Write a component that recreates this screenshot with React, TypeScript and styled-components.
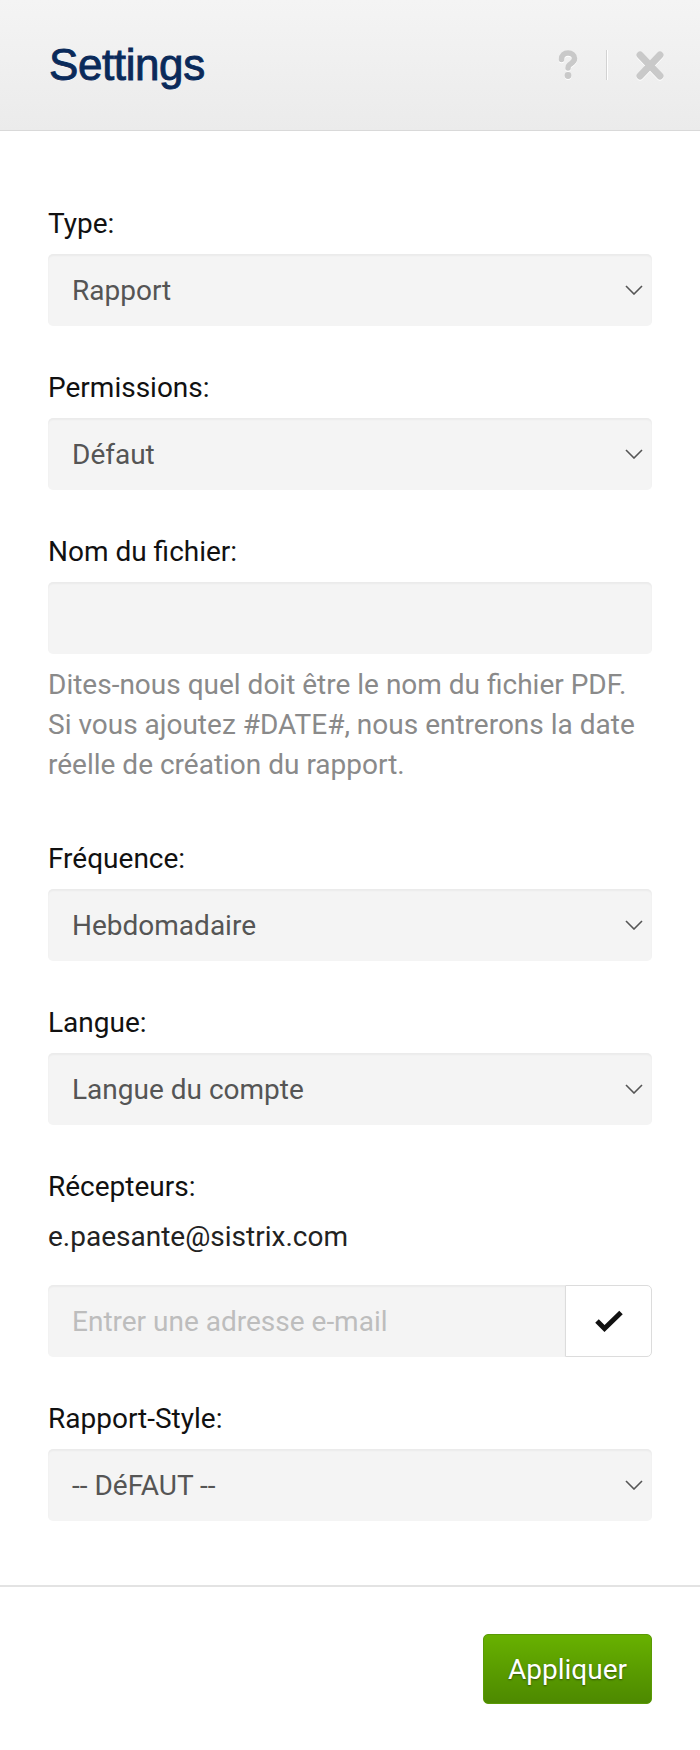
import { FC } from 'react'
import styled, { createGlobalStyle } from 'styled-components'

const GlobalStyle = createGlobalStyle`
  html, body {
    margin: 0;
    padding: 0;
    background: #fff;
  }
  body {
    font-family: Roboto, "Liberation Sans", Arial, sans-serif;
    -webkit-font-smoothing: antialiased;
  }
  * { box-sizing: border-box; }
`

// 下拉框的选项
const selects = [
  { label: 'Type:', value: 'Rapport' },
  { label: 'Permissions:', value: 'Défaut' },
]

const selectsAfter = [
  { label: 'Fréquence:', value: 'Hebdomadaire' },
  { label: 'Langue:', value: 'Langue du compte' },
]

const Chevron: FC = () => (
  <svg width="18" height="10" viewBox="0 0 18 10" fill="none">
    <path d="M1 1l8 8 8-8" stroke="#555" strokeWidth="1.6" strokeLinejoin="miter" />
  </svg>
)

interface SelectFieldProps {
  label: string;
  value: string;
}

const SelectField: FC<SelectFieldProps> = ({ label, value }) => (
  <Field>
    <Label>{label}</Label>
    <SelectBox>
      <span>{value}</span>
      <Chevron />
    </SelectBox>
  </Field>
)

const App: FC = () => {
  return (
    <Modal>
      <GlobalStyle />
      <Header>
        <Title>Settings</Title>
        <HeaderTools>
          <ToolIcon aria-label="help">
            <svg width="20" height="30" viewBox="0 0 20 30" fill="none">
              <path
                d="M3.5 9.5C3.5 5.2 6.5 3 10 3c3.8 0 6.5 2.2 6.5 5.6 0 3.6-3.2 4.6-5 6.2-1 .9-1.5 1.6-1.5 3.2"
                stroke="#c9c9c9"
                strokeWidth="5.5"
                strokeLinecap="round"
              />
              <circle cx="10" cy="25.5" r="3.4" fill="#c9c9c9" />
            </svg>
          </ToolIcon>
          <ToolDivider />
          <ToolIcon aria-label="close">
            <svg width="30" height="31" viewBox="0 0 30 31" fill="none">
              <path d="M5 5l20 21M25 5L5 26" stroke="#c9c9c9" strokeWidth="7" strokeLinecap="round" />
            </svg>
          </ToolIcon>
        </HeaderTools>
      </Header>

      <Body>
        {selects.map(s => (
          <SelectField key={s.label} label={s.label} value={s.value} />
        ))}

        <Field $wide>
          <Label>Nom du fichier:</Label>
          <TextInput type="text" />
          <Help>
            Dites-nous quel doit être le nom du fichier PDF.<br />
            Si vous ajoutez #DATE#, nous entrerons la date<br />
            réelle de création du rapport.
          </Help>
        </Field>

        {selectsAfter.map(s => (
          <SelectField key={s.label} label={s.label} value={s.value} />
        ))}

        <Field>
          <Label>Récepteurs:</Label>
          <Recipient>e.paesante@sistrix.com</Recipient>
          <InputGroup>
            <GroupInput type="text" placeholder="Entrer une adresse e-mail" />
            <AddButton type="button">
              <svg width="30" height="22" viewBox="0 0 30 22" fill="none">
                <path d="M3 11l7.5 7.5L27 2.5" stroke="#111" strokeWidth="5" />
              </svg>
            </AddButton>
          </InputGroup>
        </Field>

        <SelectField label="Rapport-Style:" value="-- DéFAUT --" />
      </Body>

      <Footer>
        <ApplyButton type="button">Appliquer</ApplyButton>
      </Footer>
    </Modal>
  )
}

export default App

const Modal = styled.div`
  width: 700px;
  min-height: 1750px;
  background: #fff;
  display: flex;
  flex-direction: column;
`

const Header = styled.div`
  height: 131px;
  display: flex;
  align-items: center;
  justify-content: space-between;
  padding: 0 35px 0 49px;
  background: linear-gradient(#f4f4f4, #ebebeb);
  border-bottom: 1px solid #d9d9d9;
`

const Title = styled.h1`
  margin: 0;
  font-family: "Liberation Sans", Arial, sans-serif;
  font-weight: 400;
  font-size: 44px;
  line-height: 44px;
  letter-spacing: -0.4px;
  color: #0a2a5a;
  -webkit-text-stroke: 0.9px #0a2a5a;
  text-shadow: 0 1px 0 #fff;
`

const HeaderTools = styled.div`
  display: flex;
  align-items: center;
  gap: 28px;
`

const ToolIcon = styled.span`
  display: flex;
  align-items: center;
  filter: drop-shadow(0 1px 0 #fff);
`

const ToolDivider = styled.span`
  width: 1px;
  height: 30px;
  background: #d2d2d2;
  box-shadow: 1px 0 0 #fff;
`

const Body = styled.div`
  padding: 73px 48px 64px;
`

const Field = styled.div<{ $wide?: boolean }>`
  margin-bottom: ${({ $wide }) => ($wide ? '54px' : '42px')};
  &:last-child {
    margin-bottom: 0;
  }
`

const Label = styled.div`
  font-size: 28px;
  line-height: 40px;
  color: #111;
  margin-bottom: 10px;
`

const SelectBox = styled.div`
  height: 72px;
  display: flex;
  align-items: center;
  justify-content: space-between;
  padding: 0 9px 0 24px;
  background: #f4f4f4;
  border-radius: 5px;
  box-shadow: inset 0 2px 2px rgba(0, 0, 0, 0.04);
  font-size: 28px;
  color: #555;
`

const TextInput = styled.input`
  display: block;
  width: 100%;
  height: 72px;
  padding: 0 24px;
  border: none;
  border-radius: 5px;
  background: #f4f4f4;
  box-shadow: inset 0 2px 2px rgba(0, 0, 0, 0.04);
  font-family: inherit;
  font-size: 28px;
  color: #555;
  outline: none;
`

const Help = styled.p`
  margin: 11px 0 0;
  font-size: 28px;
  line-height: 40px;
  color: #8a8a8a;
`

const Recipient = styled.div`
  font-size: 28px;
  line-height: 40px;
  color: #222;
  margin-bottom: 28px;
`

const InputGroup = styled.div`
  display: flex;
  height: 72px;
`

const GroupInput = styled.input`
  flex: 1;
  min-width: 0;
  height: 100%;
  padding: 0 24px;
  border: none;
  border-radius: 5px 0 0 5px;
  background: #f4f4f4;
  box-shadow: inset 0 2px 2px rgba(0, 0, 0, 0.04);
  font-family: inherit;
  font-size: 28px;
  color: #555;
  outline: none;
  &::placeholder {
    color: #bdbdbd;
  }
`

const AddButton = styled.button`
  width: 87px;
  height: 100%;
  display: flex;
  align-items: center;
  justify-content: center;
  padding: 0;
  background: #fff;
  border: 1px solid #dcdcdc;
  border-radius: 0 5px 5px 0;
  cursor: pointer;
`

const Footer = styled.div`
  display: flex;
  justify-content: flex-end;
  padding: 47px 48px 45px;
  border-top: 2px solid #e3e3e3;
`

const ApplyButton = styled.button`
  height: 70px;
  padding: 0 24px;
  border: 1px solid #5a9a05;
  border-radius: 5px;
  background: linear-gradient(#68b100, #4d8900);
  font-family: Roboto, "Liberation Sans", Arial, sans-serif;
  font-size: 28px;
  color: #fff;
  text-shadow: 0 1px 2px rgba(0, 0, 0, 0.45);
  cursor: pointer;
`
